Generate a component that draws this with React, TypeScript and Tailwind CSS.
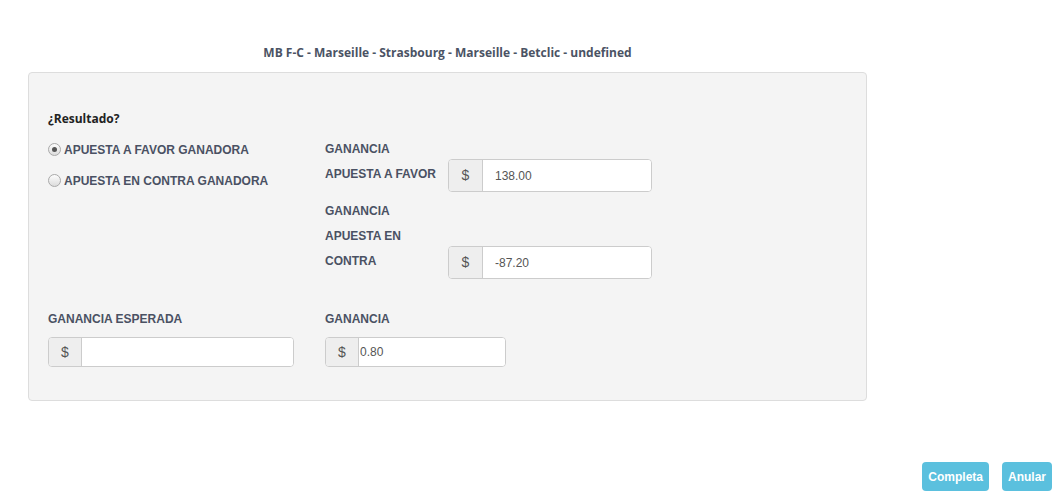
import { FC } from "react";

const labelCls =
  "font-['Liberation_Sans',Arial,sans-serif] font-bold text-[12px] text-[#4a5163]";

const Radio: FC<{ checked?: boolean; label: string }> = ({ checked, label }) => (
  <label className="flex items-center gap-[3px] h-[25px]">
    <span className="w-[13px] h-[13px] rounded-full border border-[#a9a9a9] bg-gradient-to-b from-[#fdfdfd] to-[#dcdcdc] flex items-center justify-center">
      {checked && <span className="w-[5px] h-[5px] rounded-full bg-[#555]" />}
    </span>
    <span className={labelCls}>{label}</span>
  </label>
);

const MoneyInput: FC<{
  width: string;
  height: string;
  value: string;
  tight?: boolean;
}> = ({ width, height, value, tight }) => (
  <div
    className={`flex border border-[#cccccc] rounded-[4px] bg-white overflow-hidden ${width} ${height}`}
  >
    <span
      className={`flex items-center justify-center bg-[#eeeeee] border-r border-[#cccccc] text-[#555] text-[14px] font-['Liberation_Sans',Arial,sans-serif] ${
        tight ? "w-[33px]" : "w-[34px]"
      }`}
    >
      $
    </span>
    <input
      readOnly
      value={value}
      className={`flex-1 min-w-0 bg-white outline-none text-[12px] text-[#555] font-['Liberation_Sans',Arial,sans-serif] ${
        tight ? "pl-[1px]" : "pl-[12px]"
      }`}
    />
  </div>
);

const App: FC = () => {
  return (
    <div className="w-full min-h-screen bg-white relative">
      <div className="ml-[28px] w-[839px] pt-[44px]">
        <h1 className="text-center font-['Open_Sans',sans-serif] font-bold text-[12px] leading-[17px] text-[#4b5364]">
          MB F-C - Marseille - Strasbourg - Marseille - Betclic - undefined
        </h1>

        <div className="mt-[11px] border border-[#dddddd] rounded-[4px] bg-[#f4f4f4] px-[19px] pt-[37px] pb-[33px]">
          <p className="font-['Open_Sans',sans-serif] font-bold text-[12px] leading-[17px] text-[#222]">
            ¿Resultado?
          </p>

          <div className="mt-[10px] flex">
            {/* Result choice */}
            <div className="w-[277px] flex flex-col gap-[6px]">
              <Radio checked label="APUESTA A FAVOR GANADORA" />
              <Radio label="APUESTA EN CONTRA GANADORA" />
            </div>

            {/* Profit per side */}
            <div className="flex flex-col gap-[7px]">
              <div className="flex items-end">
                <span className={`w-[123px] leading-[25px] mb-[5px] ${labelCls}`}>
                  GANANCIA APUESTA A FAVOR
                </span>
                <MoneyInput width="w-[204px]" height="h-[33px]" value="138.00" />
              </div>
              <div className="flex items-end">
                <span className={`w-[123px] leading-[25px] mb-[5px] ${labelCls}`}>
                  GANANCIA APUESTA EN CONTRA
                </span>
                <MoneyInput width="w-[204px]" height="h-[33px]" value="-87.20" />
              </div>
            </div>
          </div>

          <div className="mt-[32px] flex">
            <div className="w-[277px]">
              <p className={`leading-[17px] mb-[9px] ${labelCls}`}>GANANCIA ESPERADA</p>
              <MoneyInput width="w-[246px]" height="h-[30px]" value="" tight />
            </div>
            <div>
              <p className={`leading-[17px] mb-[9px] ${labelCls}`}>GANANCIA</p>
              <MoneyInput width="w-[181px]" height="h-[30px]" value="0.80" tight />
            </div>
          </div>
        </div>
      </div>

      <div className="mt-[61px] pr-[10px] flex justify-end gap-[13px]">
        <button className="h-[29px] px-[6px] rounded-[4px] bg-[#5bc0de] text-white text-[12px] font-bold font-['Liberation_Sans',Arial,sans-serif]">
          Completa
        </button>
        <button className="h-[29px] px-[6px] rounded-[4px] bg-[#5bc0de] text-white text-[12px] font-bold font-['Liberation_Sans',Arial,sans-serif]">
          Anular
        </button>
      </div>
    </div>
  );
};

export default App;
